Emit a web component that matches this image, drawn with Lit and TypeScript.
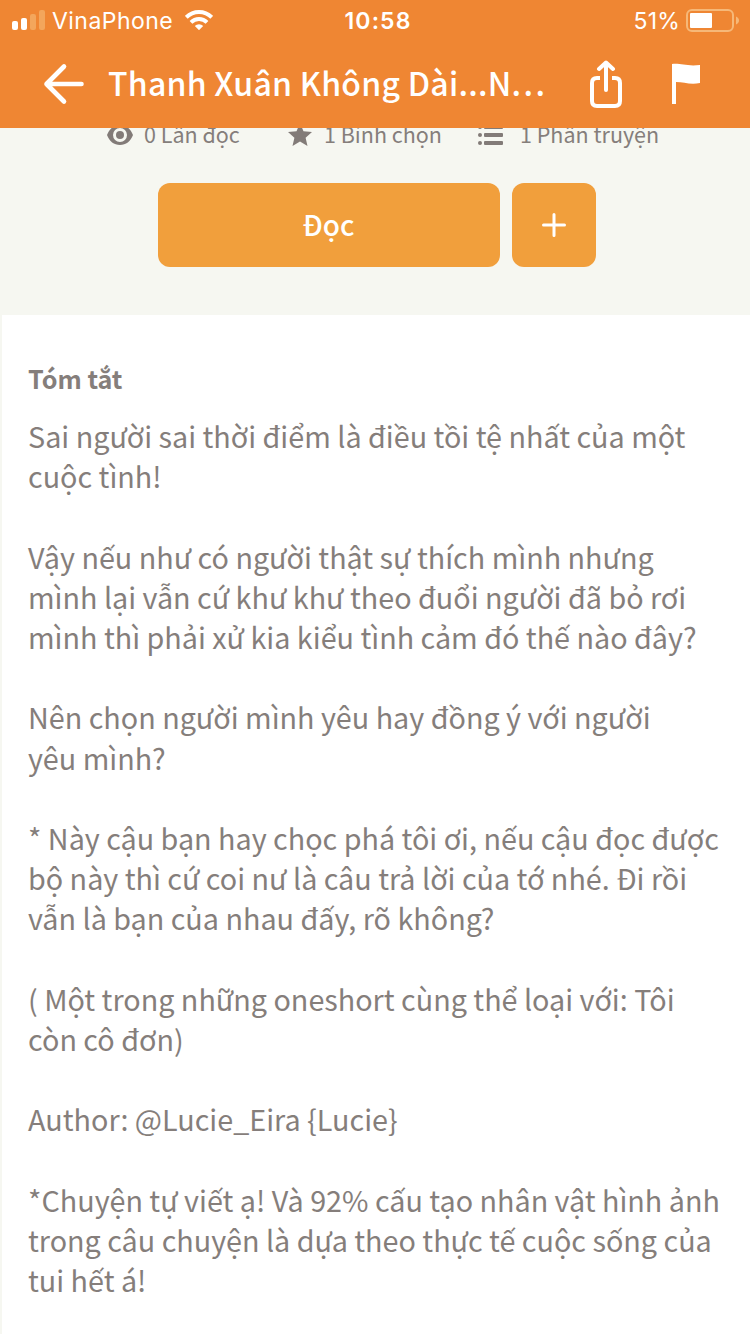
import { LitElement, html, css } from "lit";
import { customElement } from "lit/decorators.js";

const SUMMARY: string[] = [
  "Sai người sai thời điểm là điều tồi tệ nhất của một",
  "cuộc tình!",
  "",
  "Vậy nếu như có người thật sự thích mình nhưng",
  "mình lại vẫn cứ khư khư theo đuổi người đã bỏ rơi",
  "mình thì phải xử kia kiểu tình cảm đó thế nào đây?",
  "",
  "Nên chọn người mình yêu hay đồng ý với người",
  "yêu mình?",
  "",
  "* Này cậu bạn hay chọc phá tôi ơi, nếu cậu đọc được",
  "bộ này thì cứ coi nư là câu trả lời của tớ nhé. Đi rồi",
  "vẫn là bạn của nhau đấy, rõ không?",
  "",
  "( Một trong những oneshort cùng thể loại với: Tôi",
  "còn cô đơn)",
  "",
  "Author: @Lucie_Eira {Lucie}",
  "",
  "*Chuyện tự viết ạ! Và 92% cấu tạo nhân vật hình ảnh",
  "trong câu chuyện là dựa theo thực tế cuộc sống của",
  "tui hết á!",
];

@customElement("status-bar")
class StatusBar extends LitElement {
  static styles = css`
    :host { display: grid; grid-template-columns: 1fr auto 1fr; align-items: center; height: 40px; padding: 0 11px 0 12px; color: #fff; font: 400 23px/40px Inter, sans-serif; }
    .left, .right { display: flex; align-items: center; height: 40px; }
    .right { justify-content: flex-end; }
    .signal { margin-right: 7px; }
    .carrier, .time, .percent { height: 40px; line-height: 42px; }
    .carrier { letter-spacing: 0.45px; margin-right: 12px; }
    .time { font-weight: 600; font-size: 23px; letter-spacing: 1.1px; padding-left: 5px; }
    .percent { letter-spacing: 0.2px; }
    .battery { margin-left: 6px; }
    svg { display: block; }
  `;
  render() {
    return html`
      <div class="left">
        <svg class="signal" width="33" height="20" viewBox="0 0 33 20" fill="#fff">
          <rect y="11" width="6" height="9" rx="2" /><rect x="9" y="8" width="6" height="12" rx="2" />
          <rect x="18" y="4" width="6" height="16" rx="2" fill="#f3a65c" /><rect x="27" width="6" height="20" rx="2" fill="#f3a65c" />
        </svg>
        <span class="carrier">VinaPhone</span>
        <svg width="28" height="20" viewBox="0 0 28 20" fill="none" stroke="#fff" stroke-width="3.9">
          <path d="M1.3 7.300a18 18 0 0 1 25.400 0" /><path d="M6 12.3a11.4 11.4 0 0 1 16 0" />
          <path d="M9.8 16a6 6 0 0 1 8.4 0L14 20.2z" fill="#fff" stroke="none" />
        </svg>
      </div>
      <span class="time">10:58</span>
      <div class="right">
        <span class="percent">51%</span>
        <svg class="battery" width="53" height="24" viewBox="0 0 53 24">
          <rect x="1" y="2" width="46" height="21" rx="5" fill="none" stroke="#f6b878" stroke-width="2" />
          <rect x="4" y="5" width="22" height="15" rx="1" fill="#fff" />
          <path d="M50 8.500c4 1.500 4 6.500 0 8z" fill="#f6b878" />
        </svg>
      </div>`;
  }
}

@customElement("app-root")
class AppRoot extends LitElement {
  static styles = css`
    :host { display: flex; flex-direction: column; width: 750px; height: 1334px; overflow: hidden; background: #fff; color: #857e7b; font-family: "Noto Sans CJK JP", "Noto Sans", sans-serif; }
    svg { display: block; flex: none; }
    .top { height: 128px; background: #ef8633; flex: none; }
    .nav { display: flex; align-items: center; height: 88px; padding: 0 47px 0 43px; color: #fff; }
    .title { width: 443px; margin-left: 23px; font-size: 32px; font-weight: 500; line-height: 84px; height: 88px; letter-spacing: 0.25px; white-space: nowrap; }
    .dots { letter-spacing: 2.400px; }
    .share { margin-left: 39px; }
    .flag { margin-left: 49px; }
    .hero { height: 187px; flex: none; background: #f6f7f1; overflow: hidden; }
    .stats { display: flex; align-items: center; height: 40px; margin-top: -13px; padding-left: 107px; font-size: 21.500px; line-height: 38px; white-space: nowrap; }
    .stat { display: flex; align-items: center; height: 40px; }
    .stat span { height: 40px; }
    .reads { width: 181px; gap: 11px; }
    .votes { width: 190px; gap: 12px; }
    .parts { gap: 17px; }
    .actions { display: flex; gap: 12px; margin: 28px 0 0 158px; }
    .btn { display: flex; align-items: center; justify-content: center; height: 84px; width: 84px; padding: 0; border: 0; border-radius: 12px; background: #f19f3c; color: #fff; font: 500 28px/84px "Noto Sans CJK JP", sans-serif; }
    .read { width: 342px; padding: 0 1px 2px 0; box-sizing: border-box; }
    .about { flex: 1; border-left: 2px solid #f6f7f1; padding: 43px 0 0 26px; }
    .heading { margin: 0; font-size: 25.2px; font-weight: 700; line-height: 40px; }
    .summary { margin-top: 18px; font-size: 28.74px; line-height: 40.2px; white-space: nowrap; }
    .line { height: 40.2px; }
  `;
  render() {
    return html`
      <header class="top">
        <status-bar></status-bar>
        <div class="nav">
          <svg width="42" height="42" viewBox="0 0 42 42" fill="none" stroke="#fff" stroke-width="4.600" stroke-linecap="round" stroke-linejoin="round"><path d="M38.500 21H3.500M21 3.500L3.500 21 21 38.500" /></svg>
          <div class="title">Thanh Xuân Không Dài...N<span class="dots">...</span></div>
          <svg class="share" width="32" height="48" viewBox="0 0 32 48" fill="none" stroke="#fff" stroke-width="4" stroke-linecap="round" stroke-linejoin="round">
            <path d="M10 18H7q-5 0-5 5v18q0 5 5 5h18q5 0 5-5V23q0-5-5-5h-3" stroke-linecap="butt" /><path d="M16 30V3M9 9l7-6.500L23 9" />
          </svg>
          <svg class="flag" width="30" height="42" viewBox="0 0 30 42" fill="#fff"><path d="M1 1c9-1 14 2.500 28 1v18c-10 2-16-1-24-1v22H1z" /></svg>
        </div>
      </header>
      <section class="hero">
        <div class="stats">
          <div class="stat reads">
            <svg width="26" height="20" viewBox="0 0 26 20"><path fill="#827b78" fill-rule="evenodd" d="M13 0C7 0 2.500 3.500 0 10c2.500 6.500 7 10 13 10s10.500-3.500 13-10C23.500 3.500 19 0 13 0zm0 3a7 7 0 1 1 0 14 7 7 0 0 1 0-14z" /><circle cx="13" cy="10" r="4" fill="#827b78" /></svg>
            <span>0 Lần đọc</span>
          </div>
          <div class="stat votes">
            <svg width="24" height="24" viewBox="0 0 24 24" fill="#827b78"><path d="M12 0l3.500 8.300 8.500.7-6.400 5.800L19.500 23 12 18.500 4.500 23l1.900-8.200L0 9l8.500-.7z" /></svg>
            <span>1 Bình chọn</span>
          </div>
          <div class="stat parts">
            <svg width="25" height="20" viewBox="0 0 25 20" fill="#827b78"><circle cx="2" cy="2" r="2" /><circle cx="2" cy="10" r="2" /><circle cx="2" cy="18" r="2" /><rect x="6" width="19" height="4" rx="1" /><rect x="6" y="8" width="19" height="4" rx="1" /><rect x="6" y="16" width="19" height="4" rx="1" /></svg>
            <span>1 Phần truyện</span>
          </div>
        </div>
        <div class="actions">
          <button class="btn read">Đọc</button>
          <button class="btn"><svg width="24" height="24" viewBox="0 0 24 24" stroke="#fff" stroke-width="3" stroke-linecap="round"><path d="M12 1.500v21M1.500 12h21" /></svg></button>
        </div>
      </section>
      <section class="about">
        <h2 class="heading">Tóm tắt</h2>
        <div class="summary">${SUMMARY.map((line) => html`<div class="line">${line}</div>`)}</div>
      </section>`;
  }
}
